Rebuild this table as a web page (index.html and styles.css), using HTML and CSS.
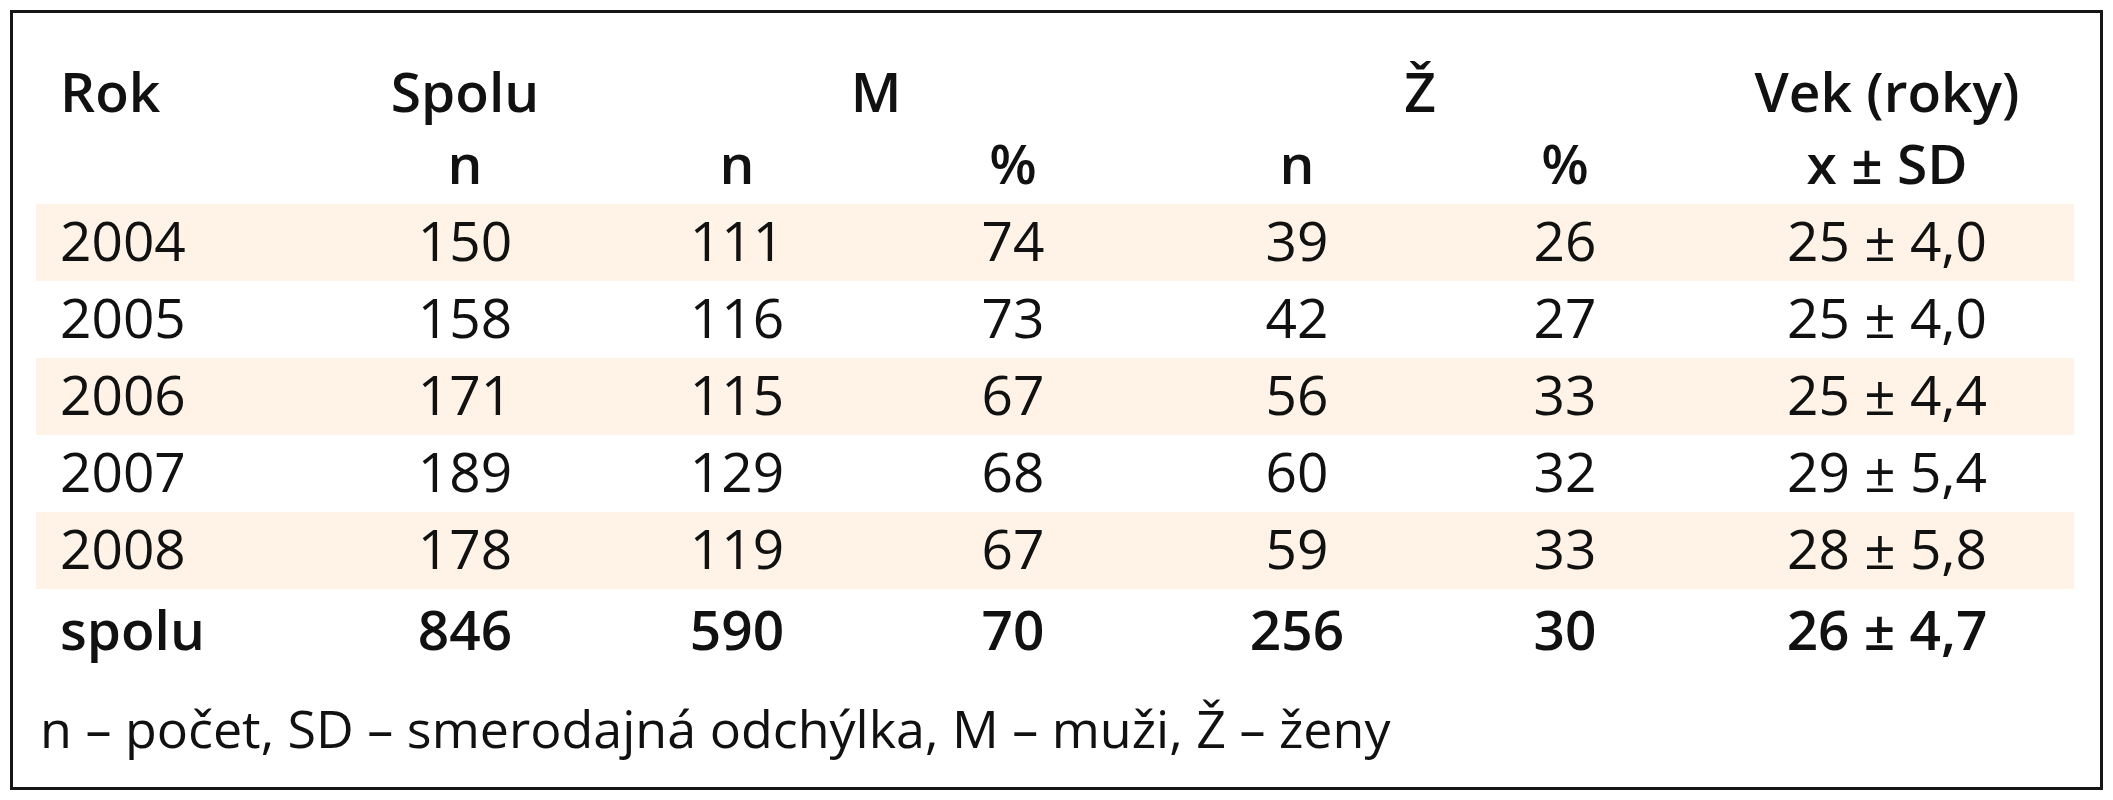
FILE: index.html
```html
<!DOCTYPE html>
<html lang="sk">
<head>
<meta charset="utf-8">
<title>Tabuľka</title>
<link rel="stylesheet" href="styles.css">
</head>
<body>
<div class="box">
  <table class="data">
    <colgroup>
      <col class="c1"><col class="c2"><col class="c3"><col class="c4"><col class="c5"><col class="c6"><col class="c7">
    </colgroup>
    <thead>
      <tr class="h1">
        <th class="left">Rok</th>
        <th>Spolu</th>
        <th colspan="2">M</th>
        <th colspan="2">Ž</th>
        <th class="age">Vek (roky)</th>
      </tr>
      <tr class="h2">
        <th></th>
        <th>n</th>
        <th>n</th>
        <th>%</th>
        <th>n</th>
        <th>%</th>
        <th class="age">x ± SD</th>
      </tr>
    </thead>
    <tbody>
      <tr class="odd"><td class="left">2004</td><td>150</td><td>111</td><td>74</td><td>39</td><td>26</td><td class="age">25 ± 4,0</td></tr>
      <tr><td class="left">2005</td><td>158</td><td>116</td><td>73</td><td>42</td><td>27</td><td class="age">25 ± 4,0</td></tr>
      <tr class="odd"><td class="left">2006</td><td>171</td><td>115</td><td>67</td><td>56</td><td>33</td><td class="age">25 ± 4,4</td></tr>
      <tr><td class="left">2007</td><td>189</td><td>129</td><td>68</td><td>60</td><td>32</td><td class="age">29 ± 5,4</td></tr>
      <tr class="odd"><td class="left">2008</td><td>178</td><td>119</td><td>67</td><td>59</td><td>33</td><td class="age">28 ± 5,8</td></tr>
      <tr class="total"><td class="left">spolu</td><td>846</td><td>590</td><td>70</td><td>256</td><td>30</td><td class="age">26 ± 4,7</td></tr>
    </tbody>
  </table>
  <p class="note">n – počet, SD – smerodajná odchýlka, M – muži, Ž – ženy</p>
</div>
</body>
</html>
```

FILE: styles.css
```css
html, body {
  margin: 0;
  padding: 0;
  background: #ffffff;
}

body {
  font-family: "Open Sans", "DejaVu Sans", sans-serif;
  color: #111111;
}

.box {
  box-sizing: border-box;
  width: 2093px;
  height: 780px;
  margin: 10px 0 0 10px;
  border: 3px solid #161616;
  padding: 42px 26px 0 23px;
}

.data {
  width: 2038px;
  table-layout: fixed;
  border-collapse: collapse;
  border-spacing: 0;
  font-size: 55px;
}

.c1 { width: 294px; }
.c2 { width: 270px; }
.c3 { width: 274px; }
.c4 { width: 278px; }
.c5 { width: 290px; }
.c6 { width: 246px; }
.c7 { width: 386px; }

.data th,
.data td {
  padding: 0;
  text-align: center;
  white-space: nowrap;
}

.data th {
  font-weight: 600;
}

.data td {
  font-weight: 400;
}

.data .left {
  text-align: left;
  padding-left: 24px;
}

.data .age {
  padding-left: 12px;
}

.h1 th {
  height: 72px;
  line-height: 72px;
}

.h2 th {
  height: 71px;
  line-height: 71px;
  padding-bottom: 6px;
}

.data tbody td {
  height: 71px;
  line-height: 71px;
  padding-bottom: 6px;
}

.data tbody tr.odd td {
  background: #fef3e6;
}

.data tbody tr.total td {
  font-weight: 600;
  padding-top: 4px;
}

.note {
  margin: 28px 0 0 4px;
  font-size: 52px;
  line-height: 60px;
  font-weight: 400;
}
```
